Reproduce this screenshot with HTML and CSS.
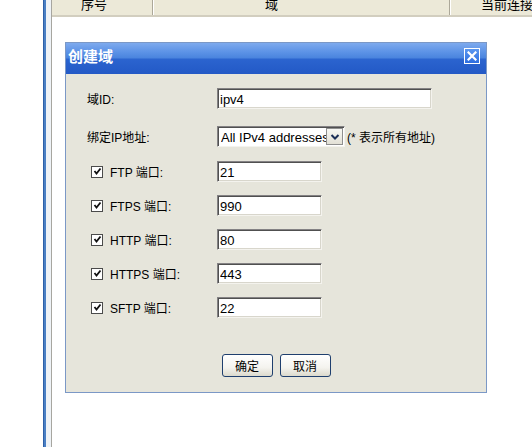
FILE: index.html
```html
<!DOCTYPE html>
<html lang="zh-CN">
<head>
<meta charset="utf-8">
<title>创建域</title>
<link rel="stylesheet" href="styles.css">
</head>
<body>
<div class="page">
  <div class="rail">
    <div class="rail-blue"></div>
    <div class="rail-gap"></div>
    <div class="rail-line"></div>
  </div>
  <div class="main">
    <div class="list-header">
      <div class="col col-no">序号</div>
      <div class="col col-domain">域</div>
      <div class="col col-conn">当前连接数</div>
    </div>

    <div class="dialog">
      <div class="titlebar">
        <span class="title">创建域</span>
        <span class="close">
          <svg width="10" height="10" viewBox="0 0 10 10"><path d="M1.5 1.5 L8.5 8.5 M8.5 1.5 L1.5 8.5" stroke="#fff" stroke-width="2.2" stroke-linecap="square"/></svg>
        </span>
      </div>
      <div class="body">
        <div class="row row-first">
          <label class="label">域ID:</label>
          <input class="field field-wide" type="text" value="ipv4">
        </div>
        <div class="row row-second">
          <label class="label">绑定IP地址:</label>
          <span class="select">
            <select class="select-native"><option>All IPv4 addresses</option></select>
            <span class="select-btn">
              <svg width="10" height="8" viewBox="0 0 10 8"><path d="M1.5 2 L5 5.5 L8.5 2" fill="none" stroke="#1b2f58" stroke-width="2"/></svg>
            </span>
          </span>
          <span class="hint">(* 表示所有地址)</span>
        </div>
        <div class="row row-check">
          <label class="label label-check"><span class="check"><svg width="9" height="9" viewBox="0 0 9 9"><path d="M1.5 4 L3.5 6.5 L7.5 1.5" fill="none" stroke="#111" stroke-width="1.8"/></svg></span>FTP 端口:</label>
          <input class="field field-port" type="text" value="21">
        </div>
        <div class="row row-check">
          <label class="label label-check"><span class="check"><svg width="9" height="9" viewBox="0 0 9 9"><path d="M1.5 4 L3.5 6.5 L7.5 1.5" fill="none" stroke="#111" stroke-width="1.8"/></svg></span>FTPS 端口:</label>
          <input class="field field-port" type="text" value="990">
        </div>
        <div class="row row-check">
          <label class="label label-check"><span class="check"><svg width="9" height="9" viewBox="0 0 9 9"><path d="M1.5 4 L3.5 6.5 L7.5 1.5" fill="none" stroke="#111" stroke-width="1.8"/></svg></span>HTTP 端口:</label>
          <input class="field field-port" type="text" value="80">
        </div>
        <div class="row row-check">
          <label class="label label-check"><span class="check"><svg width="9" height="9" viewBox="0 0 9 9"><path d="M1.5 4 L3.5 6.5 L7.5 1.5" fill="none" stroke="#111" stroke-width="1.8"/></svg></span>HTTPS 端口:</label>
          <input class="field field-port" type="text" value="443">
        </div>
        <div class="row row-check">
          <label class="label label-check"><span class="check"><svg width="9" height="9" viewBox="0 0 9 9"><path d="M1.5 4 L3.5 6.5 L7.5 1.5" fill="none" stroke="#111" stroke-width="1.8"/></svg></span>SFTP 端口:</label>
          <input class="field field-port" type="text" value="22">
        </div>
        <div class="buttons">
          <button class="btn" type="button">确定</button>
          <button class="btn" type="button">取消</button>
        </div>
      </div>
    </div>
  </div>
</div>
</body>
</html>
```
FILE: styles.css
```css
* { box-sizing: border-box; }

html, body {
  margin: 0;
  padding: 0;
  background: #fff;
}

body {
  font-family: "Liberation Sans", Arial, "Noto Sans CJK SC", sans-serif;
  font-size: 12px;
  color: #000;
}

.page {
  display: flex;
  min-height: 100vh;
  overflow: hidden;
}

.rail {
  display: flex;
  width: 52px;
  flex: 0 0 52px;
  padding-left: 43px;
}

.rail-blue {
  width: 3px;
  background: linear-gradient(90deg, #2d5fa6 0, #2d5fa6 1px, #4a7fc4 1px, #4a7fc4 3px);
}

.rail-gap {
  width: 5px;
  background: #eef2f6;
}

.rail-line {
  width: 1px;
  background: #a7a6a0;
}

.main {
  flex: 1;
  min-width: 0;
  overflow: hidden;
}

.list-header {
  display: flex;
  height: 17px;
  background: #ece9d8;
  border-bottom: 2px solid #d2cebf;
  white-space: nowrap;
}

.col {
  height: 15px;
  line-height: 12px;
  display: flex;
  align-items: flex-end;
  padding-bottom: 4px;
  font-size: 13px;
  flex-shrink: 0;
}

.col-no {
  width: 101px;
  padding-left: 29px;
  border-right: 1px solid #aca899;
  box-shadow: 1px 0 0 #fff;
}

.col-domain {
  width: 297px;
  padding-left: 112px;
  border-right: 1px solid #aca899;
  box-shadow: 1px 0 0 #fff;
}

.col-conn {
  padding-left: 31px;
}

.dialog {
  margin: 25px 0 0 13px;
  width: 422px;
  border: 1px solid #7b98c6;
  background: #e6e5db;
}

.titlebar {
  display: flex;
  align-items: center;
  justify-content: space-between;
  height: 31px;
  padding: 0 6px 0 2px;
  background: linear-gradient(180deg, #7eaaee 0%, #5b92e6 30%, #4a84de 48%, #2b64cf 52%, #2359c6 100%);
}

.title {
  color: #fff;
  font-family: "Noto Sans CJK SC", sans-serif;
  font-weight: bold;
  font-size: 15px;
  line-height: 16px;
  margin-top: -6px;
}

.close {
  display: flex;
  align-items: center;
  justify-content: center;
  width: 16px;
  height: 16px;
  margin-top: -6px;
  border: 1px solid #fff;
  background: linear-gradient(180deg, #5b97f0, #2e6ee0);
}

.body {
  padding: 14px 0 15px 21px;
}

.row {
  display: flex;
  align-items: center;
  height: 21px;
}

.row-second {
  margin-top: 17px;
}

.row-check {
  margin-top: 13px;
}

.row-second + .row-check {
  margin-top: 14px;
}

.label {
  width: 130px;
  flex: 0 0 130px;
  display: flex;
  align-items: center;
  font-family: "Liberation Sans", Arial, "Noto Sans CJK SC", sans-serif;
  font-size: 12px;
}

.label-check {
  padding-left: 4px;
}

.check {
  display: flex;
  align-items: center;
  justify-content: center;
  width: 12px;
  height: 12px;
  margin-right: 7px;
  border: 1px solid #4b4b4b;
  background: #fff;
}

.field {
  height: 21px;
  padding: 2px 2px 0 2px;
  font-family: "Liberation Sans", Arial, sans-serif;
  font-size: 13px;
  color: #000;
  background: #fff;
  border: 1px solid;
  border-color: #848284 #f4f3ee #f4f3ee #848284;
  box-shadow: inset 1px 1px 0 #505050, inset -1px -1px 0 #d8d6cc;
  outline: none;
}

.field-wide {
  width: 215px;
}

.field-port {
  width: 105px;
}

.select {
  display: flex;
  width: 128px;
  height: 21px;
  border: 1px solid;
  border-color: #848284 #f4f3ee #f4f3ee #848284;
  box-shadow: inset 1px 1px 0 #505050;
  background: #fff;
  overflow: hidden;
}

.select-native {
  appearance: none;
  -webkit-appearance: none;
  flex: 1;
  min-width: 0;
  border: 0;
  margin: 0;
  padding: 1px 0 0 3px;
  background: transparent;
  font-family: "Liberation Sans", Arial, sans-serif;
  font-size: 13px;
  color: #000;
  outline: none;
}

.select-btn {
  display: flex;
  align-items: center;
  justify-content: center;
  width: 17px;
  flex: 0 0 17px;
  margin: 1px 1px 1px 0;
  border: 1px solid #8f8f8f;
  background: linear-gradient(180deg, #f8f8f4, #e2e0d6);
}

.hint {
  margin-left: 2px;
  font-size: 12px;
  font-family: "Liberation Sans", Arial, "Noto Sans CJK SC", sans-serif;
}

.buttons {
  display: flex;
  justify-content: center;
  gap: 7px;
  margin-top: 36px;
  padding-right: 21px;
}

.btn {
  width: 51px;
  height: 23px;
  padding: 0;
  font-family: "Noto Sans CJK SC", sans-serif;
  font-size: 12px;
  color: #000;
  border: 1px solid #1f3f6e;
  border-radius: 3px;
  background: linear-gradient(180deg, #ffffff 0%, #f4f3ee 60%, #dcdacd 100%);
}
```
